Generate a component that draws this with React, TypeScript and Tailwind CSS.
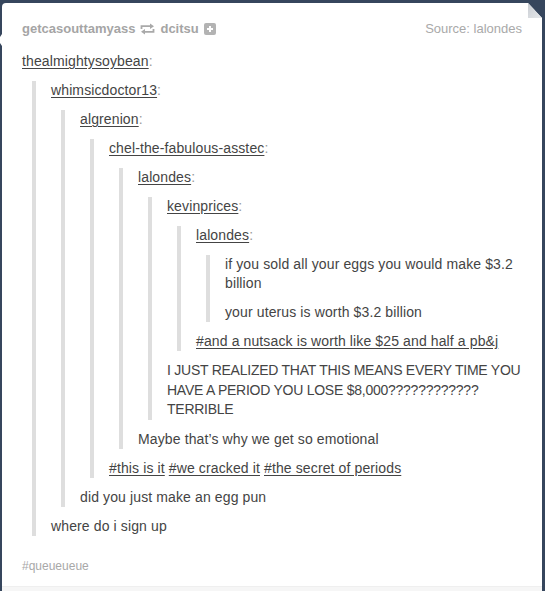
import React from 'react';

// one level of reblog nesting: grey rule on the left, stacked paragraphs
const Quote = ({ children }: { children: React.ReactNode }) => (
  <div className="ml-[10px] flex flex-col gap-[10px] border-l-4 border-[#dedede] pl-[15px]">
    {children}
  </div>
);

const User = ({ name }: { name: string }) => (
  <p>
    <a className="underline decoration-[#444] underline-offset-[2px]">{name}</a>
    <span className="text-[#9a9a9a]">:</span>
  </p>
);

const Tag = ({ children }: { children: React.ReactNode }) => (
  <a className="underline decoration-[#444] underline-offset-[2px]">{children}</a>
);

const ReblogIcon = () => (
  <svg width="15" height="12" viewBox="0 0 15 12" className="mx-[5px] shrink-0">
    <path d="M1.5 6V3.2H11" fill="none" stroke="#a9a9a9" strokeWidth="1.8" />
    <polygon points="10,0.4 14,3.2 10,6" fill="#a9a9a9" />
    <path d="M13.5 6v2.8H4" fill="none" stroke="#a9a9a9" strokeWidth="1.8" />
    <polygon points="5,6 1,8.8 5,11.6" fill="#a9a9a9" />
  </svg>
);

const FollowIcon = () => (
  <span className="ml-[5px] flex h-[12px] w-[12px] items-center justify-center rounded-[2px] bg-[#b3b3b3]">
    <svg width="8" height="8" viewBox="0 0 8 8">
      <path d="M4 1v6M1 4h6" stroke="#fff" strokeWidth="2" />
    </svg>
  </span>
);

export default function App() {
  return (
    <div className="h-[591px] w-[545px] overflow-hidden bg-[#36465d] pl-[2px] pr-[3px] pt-[3px] font-['Liberation_Sans',Arial,sans-serif]">
      <div className="relative flex h-full flex-col rounded-tl-[4px] bg-white">
        {/* avatar pointer */}
        <div className="absolute left-[-4px] top-[31px] h-0 w-0 border-y-[6px] border-r-[4px] border-y-transparent border-r-white" />

        {/* folded corner */}
        <svg width="14" height="15" viewBox="0 0 14 15" className="absolute right-0 top-0">
          <defs>
            <linearGradient id="fold" x1="0" y1="0" x2="1" y2="1">
              <stop offset="0" stopColor="#c9cdd3" />
              <stop offset="1" stopColor="#e6e8eb" />
            </linearGradient>
          </defs>
          <polygon points="0,0 14,0 14,15" fill="#36465d" />
          <polygon points="0,0 14,15 0,15" fill="url(#fold)" />
        </svg>

        <div className="flex flex-1 flex-col px-[20px] pt-[17px]">
          <div className="flex h-[18px] items-center text-[13px] leading-[18px]">
            <span className="font-bold text-[#a5a5a5]">getcasouttamyass</span>
            <ReblogIcon />
            <span className="font-bold text-[#a5a5a5]">dcitsu</span>
            <FollowIcon />
            <span className="ml-auto text-[#a9a9a9]">Source: lalondes</span>
          </div>

          <div className="mt-[14px] flex flex-col gap-[10px] text-[14px] leading-[19px] tracking-[0.12px] text-[#444]">
            <User name="thealmightysoybean" />
            <Quote>
              <User name="whimsicdoctor13" />
              <Quote>
                <User name="algrenion" />
                <Quote>
                  <User name="chel-the-fabulous-asstec" />
                  <Quote>
                    <User name="lalondes" />
                    <Quote>
                      <User name="kevinprices" />
                      <Quote>
                        <User name="lalondes" />
                        <Quote>
                          <p>if you sold all your eggs you would make $3.2 billion</p>
                          <p>your uterus is worth $3.2 billion</p>
                        </Quote>
                        <p>
                          <Tag>#and a nutsack is worth like $25 and half a pb&amp;j</Tag>
                        </p>
                      </Quote>
                      <p className="leading-[19.5px] tracking-[-0.25px]">
                        I JUST REALIZED THAT THIS MEANS EVERY TIME YOU HAVE A PERIOD YOU LOSE $8,000???????????? TERRIBLE
                      </p>
                    </Quote>
                    <p>Maybe that’s why we get so emotional</p>
                  </Quote>
                  <p>
                    <Tag>#this is it</Tag> <Tag>#we cracked it</Tag> <Tag>#the secret of periods</Tag>
                  </p>
                </Quote>
                <p>did you just make an egg pun</p>
              </Quote>
              <p>where do i sign up</p>
            </Quote>
          </div>

          <p className="mt-[22px] text-[12px] leading-[17px] text-[#a8a8a8]">#queueueue</p>
        </div>

        <div className="h-[5px] shrink-0 border-t border-[#efefef] bg-[#f6f6f6]" />
      </div>
    </div>
  );
}
